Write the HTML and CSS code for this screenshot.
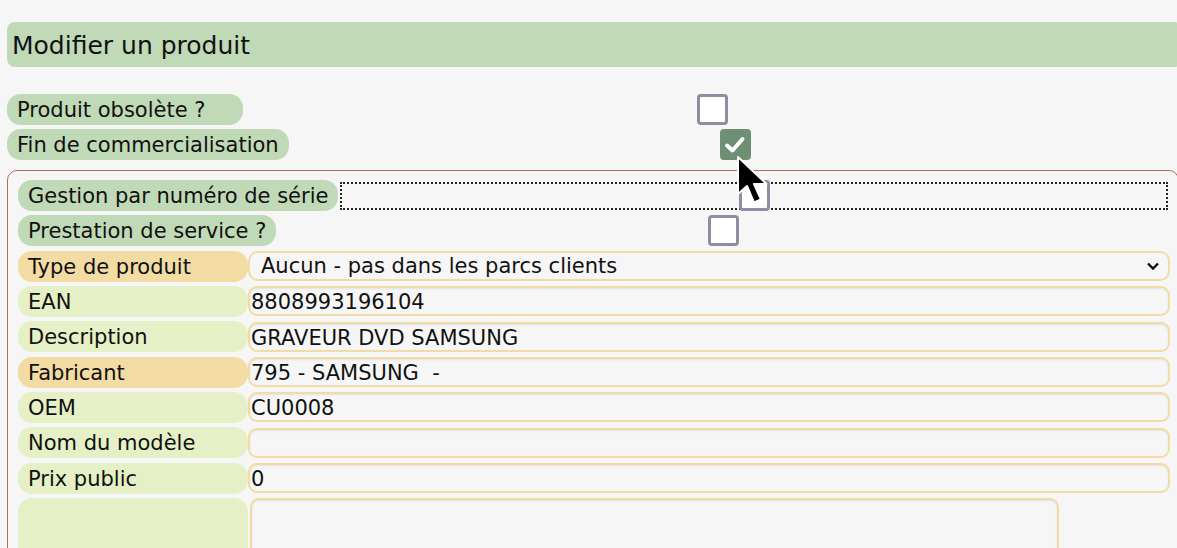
FILE: index.html
```html
<html>
    <head>
        <link rel="stylesheet" href="styles.css">
    </head>
    <body>
        <title>Modifier un produit</title>
        <div class="page">
            <h2 class="title">Modifier un produit</h2>

            <div class="row">
                <span class="label green wide">Produit obsolète ?</span>
                <div class="check-cell"><span class="checkbox"></span></div>
            </div>
            <div class="row">
                <span class="label green">Fin de commercialisation</span>
                <div class="check-cell"><span class="checkbox checked">
                    <svg width="24" height="24" viewBox="0 0 24 24"><path d="M4 12.5 L9.5 17.5 L19.5 6" fill="none" stroke="#fff" stroke-width="4" stroke-linecap="round" stroke-linejoin="round"/></svg>
                </span></div>
            </div>

            <div class="group">
                <div class="row">
                    <span class="label green">Gestion par numéro de série</span>
                    <div class="check-cell focused"><span class="checkbox"></span></div>
                </div>
                <div class="row">
                    <span class="label green">Prestation de service ?</span>
                    <div class="check-cell"><span class="checkbox"></span></div>
                </div>
                <div class="row">
                    <span class="label field tan">Type de produit</span>
                    <div class="select">
                        <span>Aucun - pas dans les parcs clients</span>
                        <svg width="14" height="10" viewBox="0 0 14 10"><path d="M2 2.5 L7 7.5 L12 2.5" fill="none" stroke="#111" stroke-width="2.4"/></svg>
                    </div>
                </div>
                <div class="row">
                    <span class="label field light">EAN</span>
                    <div class="input">8808993196104</div>
                </div>
                <div class="row">
                    <span class="label field light">Description</span>
                    <div class="input">GRAVEUR DVD SAMSUNG</div>
                </div>
                <div class="row">
                    <span class="label field tan">Fabricant</span>
                    <div class="input">795 - SAMSUNG&nbsp; -</div>
                </div>
                <div class="row">
                    <span class="label field light">OEM</span>
                    <div class="input">CU0008</div>
                </div>
                <div class="row">
                    <span class="label field light">Nom du modèle</span>
                    <div class="input"></div>
                </div>
                <div class="row">
                    <span class="label field light">Prix public</span>
                    <div class="input">0</div>
                </div>
                <div class="row tall">
                    <span class="label field light"></span>
                    <div class="textarea"></div>
                </div>
            </div>
        </div>

        <svg class="cursor" width="46" height="56" viewBox="0 0 46 56">
            <path d="M3 2 L3 39 L12 31 L19 47.5 L26 44.5 L19 29 L31.5 29 Z" fill="#000" stroke="#fff" stroke-width="2" stroke-linejoin="round"/>
        </svg>
    </body>
</html>
```

FILE: styles.css
```css
html {
    overflow: hidden;
}
body {
    margin: 0;
    background-color: #f6f6f6;
}
* {
    box-sizing: border-box;
    font-family: "DejaVu Sans", Verdana, sans-serif;
    color: #111;
}
.page {
    width: 1175px;
    margin-left: 7px;
    padding-top: 22px;
}
.title {
    margin: 0 0 27px 0;
    height: 45px;
    line-height: 47px;
    padding-left: 5px;
    font-size: 25px;
    font-weight: normal;
    background-color: #c0d9b7;
    border-radius: 8px;
}
.row {
    display: flex;
    align-items: center;
    margin-bottom: 4px;
}
.group .row {
    margin-bottom: 4.33px;
}
.label {
    height: 31px;
    line-height: 32px;
    padding: 0 10px;
    font-size: 21px;
    border-radius: 14px;
    white-space: nowrap;
}
.wide {
    padding-right: 38px;
}
.green {
    background-color: #c0d9b7;
}
.light {
    background-color: #e6f0c6;
}
.tan {
    background-color: #f3dca3;
}
.field {
    width: 230px;
    flex-shrink: 0;
}
.check-cell {
    flex: 1;
    display: flex;
    justify-content: center;
    align-items: center;
    height: 31px;
}
.checkbox {
    width: 31px;
    height: 31px;
    border: 3px solid #8f8da1;
    border-radius: 4px;
    background-color: #fff;
    display: flex;
    align-items: center;
    justify-content: center;
}
.checkbox.checked {
    background-color: #6e8f73;
    border-color: #6e8f73;
}
.focused {
    height: 28px;
    margin: 0 2px 0 2px;
    border: 2px dotted #222;
}
.group {
    margin-top: 10px;
    width: 1172px;
    border: 1px solid #b06c60;
    border-radius: 10px;
    padding: 9px 8px 0 10px;
}
.select {
    flex: 1;
    height: 30px;
    padding: 0 8px 0 11px;
    border: 2px solid #f3dca3;
    border-radius: 10px;
    display: flex;
    align-items: center;
    justify-content: space-between;
    font-size: 21px;
}
.select span {
    line-height: 28px;
}
.input {
    flex: 1;
    height: 30px;
    padding-left: 1px;
    line-height: 28px;
    font-size: 21px;
    border: 2px solid #f3dca3;
    border-radius: 9px;
    box-shadow: inset 0 1px 2px rgba(0, 0, 0, 0.08);
}
.tall {
    align-items: flex-start;
}
.tall .label {
    height: 90px;
}
.textarea {
    width: 809px;
    height: 90px;
    margin-left: 2px;
    border: 2px solid #f3dca3;
    border-radius: 9px;
    box-shadow: inset 0 1px 2px rgba(0, 0, 0, 0.08);
}
.cursor {
    position: absolute;
    left: 735px;
    top: 155px;
}
```
